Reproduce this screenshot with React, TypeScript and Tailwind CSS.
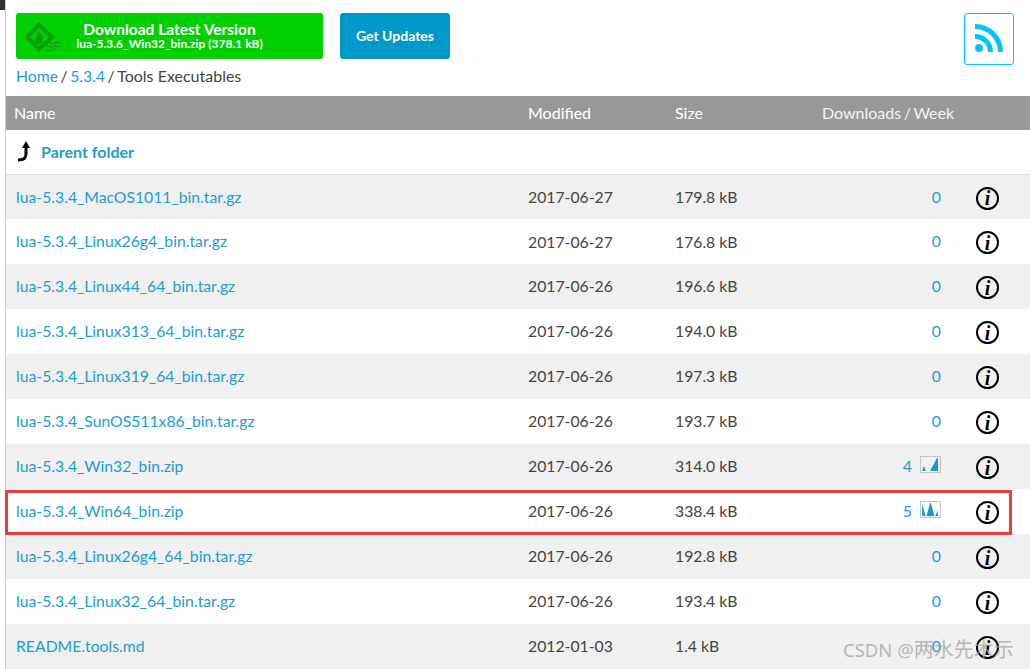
const rows = [
  { name: "lua-5.3.4_MacOS1011_bin.tar.gz", date: "2017-06-27", size: "179.8 kB", dl: "0" },
  { name: "lua-5.3.4_Linux26g4_bin.tar.gz", date: "2017-06-27", size: "176.8 kB", dl: "0" },
  { name: "lua-5.3.4_Linux44_64_bin.tar.gz", date: "2017-06-26", size: "196.6 kB", dl: "0" },
  { name: "lua-5.3.4_Linux313_64_bin.tar.gz", date: "2017-06-26", size: "194.0 kB", dl: "0" },
  { name: "lua-5.3.4_Linux319_64_bin.tar.gz", date: "2017-06-26", size: "197.3 kB", dl: "0" },
  { name: "lua-5.3.4_SunOS511x86_bin.tar.gz", date: "2017-06-26", size: "193.7 kB", dl: "0" },
  { name: "lua-5.3.4_Win32_bin.zip", date: "2017-06-26", size: "314.0 kB", dl: "4", spark: "M1 16 L3 10 L5 16 Z M10 16 L18 1 L19 1 L19 16 Z" },
  { name: "lua-5.3.4_Win64_bin.zip", date: "2017-06-26", size: "338.4 kB", dl: "5", spark: "M1 16 L1 2 L5 16 Z M6 16 L10 1 L11 1 L15 16 Z M16 16 L19 9 L19 16 Z" },
  { name: "lua-5.3.4_Linux26g4_64_bin.tar.gz", date: "2017-06-26", size: "192.8 kB", dl: "0" },
  { name: "lua-5.3.4_Linux32_64_bin.tar.gz", date: "2017-06-26", size: "193.4 kB", dl: "0" },
  { name: "README.tools.md", date: "2012-01-03", size: "1.4 kB", dl: "0" },
];

const InfoIcon = () => (
  <span className="flex h-[23px] w-[23px] items-center justify-center rounded-full border-2 border-black font-['Liberation_Serif',serif] text-[20px] font-bold italic leading-none text-black">
    i
  </span>
);

const Spark = ({ d }: { d: string }) => (
  <svg width="21" height="17" viewBox="0 0 21 17" className="mb-[4px] ml-[8px] border border-[#c4c4c4]">
    <path d={d} fill="#0a9fd0" />
  </svg>
);

export default function App() {
  return (
    <div className="relative h-[669px] w-[1030px] overflow-hidden bg-white font-['Lato',sans-serif] text-[16px] text-[#444]">
      <div className="absolute left-0 top-0 h-[10px] w-[5px] bg-[#333]" />
      <div className="ml-[5px] h-full border-l border-[#ccc]">
        <div className="flex h-[96px] flex-col pl-[10px]">
          <div className="flex items-start pt-[13px]">
            <div className="relative flex h-[46px] w-[307px] flex-col items-center justify-center rounded-[3px] bg-[#00cf00] text-white">
              <svg width="34" height="34" viewBox="0 0 34 34" className="absolute left-[10px] top-[9px]">
                <path d="M13 3 L26 15 L13 27 L1 15 Z" fill="none" stroke="#0a9e0a" strokeWidth="4" />
                <path d="M13 9 C15 13 17 15 17 18 A4 4 0 0 1 9 18 C9 15 11 13 13 9 Z" fill="#0a9e0a" />
              </svg>
              <span className="absolute left-[29px] top-[28px] font-['Liberation_Sans',sans-serif] text-[12px] leading-none text-[#0a9e0a]">SF</span>
              <span className="text-[15.5px] font-bold leading-[15px]">Download Latest Version</span>
              <span className="text-[12px] font-bold leading-[13px]">lua-5.3.6_Win32_bin.zip (378.1 kB)</span>
            </div>
            <div className="ml-[17px] flex h-[46px] w-[110px] items-center justify-center rounded-[3px] bg-[#0099cc] pb-[2px] text-[14px] font-bold text-white">
              Get Updates
            </div>
            <div className="ml-[514px] flex h-[52px] w-[50px] items-center justify-center rounded-[3px] border border-[#00c3ff] pb-[2px]">
              <svg width="28" height="28" viewBox="0 0 28 28" fill="none">
                <circle cx="4" cy="24" r="4" fill="#00c3ff" />
                <path d="M0 12.5 A15.5 15.5 0 0 1 15.5 28" stroke="#00c3ff" strokeWidth="5" />
                <path d="M0 2.5 A25.5 25.5 0 0 1 25.5 28" stroke="#00c3ff" strokeWidth="5" />
              </svg>
            </div>
          </div>
          <div className="text-[15.75px] leading-[22px] [word-spacing:-1.5px]">
            <span className="text-[#1a9dd0]">Home</span> / <span className="text-[#1a9dd0]">5.3.4</span> / <span className="text-[16px] [word-spacing:0px]">Tools Executables</span>
          </div>
        </div>
        <div className="flex h-[34px] items-center bg-[#999] text-[16px] text-white">
          <div className="w-[522px] pl-[8px]">Name</div>
          <div className="w-[147px]">Modified</div>
          <div className="w-[147px]">Size</div>
          <div className="whitespace-nowrap text-[#f2f2f2] [word-spacing:-1.5px]">Downloads / Week</div>
        </div>
        <div className="flex h-[45px] items-center border-b border-[#e2e2e2] pl-[11px]">
          <svg width="16" height="22" viewBox="0 0 16 22" className="mr-[8px]">
            <path d="M1 19 C6 19 9 18 9 13 L9 6" fill="none" stroke="#000" strokeWidth="3" />
            <path d="M9 0 L13 7 L5 7 Z" fill="#000" />
          </svg>
          <span className="text-[16px] font-bold text-[#1a9dd0]">Parent folder</span>
        </div>
        {rows.map((row, i) => (
          <div
            key={row.name}
            className={`flex items-center text-[15.75px] ${i === 0 ? "h-[44px]" : "h-[45px]"} ${i % 2 === 0 ? "bg-[#f0f0f0]" : "bg-white"}`}
          >
            <div className={`w-[522px] pl-[10px] text-[#1a9dd0] ${i === 0 ? "" : "pb-[2px]"}`}>{row.name}</div>
            <div className={`w-[147px] ${i < 2 ? "" : "pb-[2px]"}`}>{row.date}</div>
            <div className={`w-[130px] ${i < 2 ? "" : "pb-[2px]"}`}>{row.size}</div>
            <div className="flex w-[136px] items-center justify-end pb-[1px]">
              <span className="text-[#1a9dd0]">{row.dl}</span>
              {row.spark && <Spark d={row.spark} />}
            </div>
            <div className="ml-[35px] mt-[2px]">
              <InfoIcon />
            </div>
          </div>
        ))}
      </div>
      <div className="pointer-events-none absolute left-[5px] top-[490px] h-[45px] w-[1007px] border-[3px] border-[#f33a3a]" />
      <div className="pointer-events-none absolute left-[843px] top-[637px] whitespace-nowrap font-['Noto_Sans','Noto_Sans_CJK_SC',sans-serif] text-[20px] leading-[26px] text-[#a8a8a8]/80">
        <span className="text-[18.5px]">CSDN @</span>两水先木示
      </div>
    </div>
  );
}
